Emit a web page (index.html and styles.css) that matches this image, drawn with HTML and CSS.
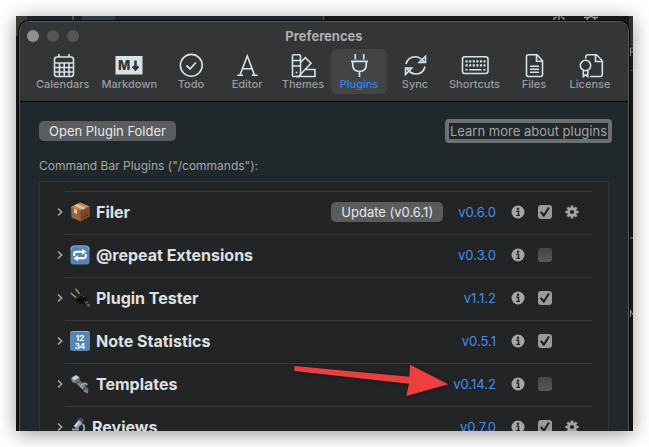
FILE: index.html
```html
<!DOCTYPE html>
<html lang="en">
<head>
<meta charset="utf-8">
<title>Preferences</title>
<meta name="viewport" content="width=device-width, initial-scale=1">
<link rel="stylesheet" href="styles.css">
</head>
<body>
<svg width="0" height="0" class="symbols" aria-hidden="true">
  <symbol id="chevron" viewBox="0 0 6 10"><path d="M1 1.500 4.700 5 1 8.500" fill="none" stroke="currentColor" stroke-width="1.500"/></symbol>
  <symbol id="info" viewBox="0 0 14 14"><circle cx="7" cy="7" r="6.500" fill="currentColor"/><circle cx="7" cy="3.800" r="1.200" fill="#232426"/><path d="M5.300 6.200H7.500V10.300M5.200 10.400H9" fill="none" stroke="#232426" stroke-width="1.400"/></symbol>
  <symbol id="gear" viewBox="0 0 14 14"><g stroke="currentColor" stroke-width="2.600"><path d="M7 .4V13.600M.4 7H13.600M2.400 2.400 11.600 11.600M11.600 2.400 2.400 11.600"/></g><circle cx="7" cy="7" r="4.800" fill="currentColor"/><circle cx="7" cy="7" r="2.100" fill="#232426"/></symbol>
</svg>

<div class="shadow">
<div class="desktop">
  <div class="behind" aria-hidden="true">
    <span class="tab-edge"></span><span class="tab-a"></span><span class="tab-b"></span><span class="tab-c"></span><span class="tab-d"></span>
    <svg class="peek" viewBox="0 0 70 5"><g fill="none" stroke="#9a9a9b" stroke-width="1.300"><path d="M1 5V2.500L4 .7M6 0V5M8 .7 11 2.500V5M31 1.500H36L38 0 40 1.500H45M35 2 33 5M41 2 43 5"/></g></svg>
  </div>
  <svg class="side" viewBox="0 0 4 415" aria-hidden="true"><path d="M0 0H4V30H0Z" fill="#303133"/><path d="M0 30H4V54H0Z" fill="#1c1d1f"/><path d="M1.500 40V32H4M1.500 36H4M1.500 301V294L4 299M1 222H4" fill="none" stroke="#8b8c8d"/><path d="M0 54.500H4" stroke="#47484a"/></svg>
  <main class="window">
    <header class="titlebar">
      <div class="caption">
        <div class="lights"><span class="light close"></span><span class="light"></span><span class="light"></span></div>
        <h1>Preferences</h1>
      </div>
      <nav class="toolbar" aria-label="Sections">
        <button class="tool"><svg viewBox="0 0 28 26"><g fill="none" stroke="currentColor" stroke-width="1.600"><rect x="5.500" y="5" width="19" height="19.500" rx="2.500"/><path d="M10 2V5M20 2V5M5.500 11H24.500M5.500 15.500H24.500M5.500 20H24.500M10.500 11V24M15.200 11V24M20 11V24"/></g></svg>Calendars</button>
        <button class="tool"><svg viewBox="0 0 28 26"><path d="M.5 4H27.500V22.500H.5Z" fill="currentColor"/><text x="3" y="18" class="mark">M</text><path d="M20.500 8.500V16M17.700 14.300 20.500 17.300 23.300 14.300" fill="none" stroke="#343537" stroke-width="2.500"/></svg>Markdown</button>
        <button class="tool"><svg viewBox="0 0 28 26"><g fill="none" stroke="currentColor" stroke-width="1.600"><circle cx="14.300" cy="13.300" r="10.900"/><path d="M9.500 13.500 13 17 19 10.500" stroke-width="1.800"/></g></svg>Todo</button>
        <button class="tool"><svg viewBox="0 0 28 26"><path d="M7 23 14.300 4 21.500 23M9.500 16.700H19.200M4.300 23.300H10M18.600 23.300H24.500" fill="none" stroke="currentColor" stroke-width="1.600"/></svg>Editor</button>
        <button class="tool"><svg viewBox="0 0 28 26"><g fill="none" stroke="currentColor" stroke-width="1.600"><rect x="3.500" y="2.700" width="8" height="21.800" rx="1"/><path d="M3.500 8.500H11.500M3.500 14H11.500M11.500 10.500 16.300 5.700 22 11.200 9.500 24.500M19.200 17.500H26V24.500H7M16.500 17.500H20"/></g><circle cx="7.500" cy="20.500" r="1" fill="currentColor"/></svg>Themes</button>
        <button class="tool selected" aria-current="page"><svg viewBox="0 0 28 26"><path d="M10.300 2V7.500M18.700 2V7.500M6 9.300H23M7.700 9.500V12.500C7.700 16.700 10 19.500 14.500 19.500S21.300 16.700 21.300 12.500V9.500M14.500 19.500V25" fill="none" stroke="currentColor" stroke-width="1.700"/></svg>Plugins</button>
        <button class="tool"><svg viewBox="0 0 28 26"><path d="M5 12C6 7.500 10 4.800 14 4.800 17.800 4.800 21 7 23 10M24.500 4.300V10.500H18.200ZM24 14.500C23 19 19.500 22 15 22 11 22 8 19.800 6 16.500M4.500 22.500V16H10.800Z" fill="none" stroke="currentColor" stroke-width="1.600"/></svg>Sync</button>
        <button class="tool"><svg viewBox="0 0 28 26"><rect x="1.500" y="4.800" width="25.500" height="16.700" rx="2.500" fill="none" stroke="currentColor" stroke-width="1.600"/><path d="M4.500 9.300H24.500M4.500 13.300H24.500" stroke="currentColor" stroke-width="2.200" stroke-dasharray="2.200 1.400"/><path d="M4.500 17.700H6.700M8.200 17.700H20.500M22.300 17.700H24.500" stroke="currentColor" stroke-width="1.600"/></svg>Shortcuts</button>
        <button class="tool"><svg viewBox="0 0 28 26"><path d="M17 2.800H8.500C7.300 2.800 6.500 3.500 6.500 4.700V22.500C6.500 23.700 7.300 24.500 8.500 24.500H20.500C21.700 24.500 22.500 23.700 22.500 22.500V8.700ZM16.500 3V9.300H22.500M10 14.300H19M10 17.300H19M10 20.200H19" fill="none" stroke="currentColor" stroke-width="1.600"/></svg>Files</button>
        <button class="tool"><svg viewBox="0 0 28 26"><g fill="none" stroke="currentColor" stroke-width="1.600"><path d="M9.800 6.500V4.700C9.800 3.500 10.500 2.800 11.700 2.800H20.500L26.300 8.800V22.500C26.300 23.700 25.500 24.500 24.300 24.500H14M19.500 3V9.500H26"/><circle cx="9.500" cy="13.500" r="5.200"/><path d="M7.300 18.500V24.500L9.500 22.800 11.800 24.500V18.500"/></g></svg>License</button>
      </nav>
    </header>

    <section class="content">
      <div class="actions">
        <button class="push">Open Plugin Folder</button>
        <button class="learn">Learn more about plugins</button>
      </div>
      <h2>Command Bar Plugins ("/commands"):</h2>
      <ul class="plugins">
        <li>
          <button class="expand" aria-label="Show Filer commands"><svg><use href="#chevron"/></svg></button>
          <svg class="emoji" viewBox="0 0 20 20"><path d="M1 5 10 .5 19.500 4.500V14.500L10.500 19.500 1.500 15.500Z" fill="#9a643c"/><path d="M1 5 10 .5 19.500 4.500 10.500 8.500Z" fill="#c18b60"/><path d="M10.500 8.500 19.500 4.500V14.500L10.500 19.500Z" fill="#7a4928"/><path d="M4 3.500 7 2 16 6 13 7.400Z" fill="#dec0a0"/><path d="M4 6.500 7 7.700V12L4 10.800Z" fill="#dfc6ad"/><path d="M13.500 14 15 13.300V15.500L13.500 16.200ZM16.500 12.500 18 11.800V14L16.500 14.700Z" fill="#4c2d1c"/></svg>
          <span class="name">Filer</span>
          <button class="push update">Update (v0.6.1)</button>
          <a class="version" href="#">v0.6.0</a>
          <button class="glyph" aria-label="About Filer"><svg><use href="#info"/></svg></button>
          <input type="checkbox" aria-label="Enable Filer" checked>
          <button class="glyph" aria-label="Filer settings"><svg><use href="#gear"/></svg></button>
        </li>
        <li>
          <button class="expand" aria-label="Show @repeat Extensions commands"><svg><use href="#chevron"/></svg></button>
          <svg class="emoji" viewBox="0 0 20 20"><rect x=".5" y=".5" width="19" height="19" rx="3" fill="#5785b4"/><path d="M1 5Q1 1 5 1H15Q19 1 19 5" fill="none" stroke="#8fb0cf"/><path d="M4.200 11V9C4.200 7.500 5 6.800 6.500 6.800H13M15.800 9V11C15.800 12.500 15 13.200 13.500 13.200H7" fill="none" stroke="#fff" stroke-width="1.900"/><path d="M12 3.800 16.500 6.800 12 9.800ZM8 10.200 3.500 13.200 8 16.200Z" fill="#fff"/></svg>
          <span class="name">@repeat Extensions</span>
          <a class="version" href="#">v0.3.0</a>
          <button class="glyph" aria-label="About @repeat Extensions"><svg><use href="#info"/></svg></button>
          <input type="checkbox" aria-label="Enable @repeat Extensions">
          <span class="glyph"></span>
        </li>
        <li>
          <button class="expand" aria-label="Show Plugin Tester commands"><svg><use href="#chevron"/></svg></button>
          <svg class="emoji" viewBox="0 0 20 20"><path d="M.8 5 6.500 10M5.500 .8 10 6.500" stroke="#b29a55" stroke-width="1.400"/><path d="M5.500 10.500 10.500 5 16.500 9.500C18 12 16 13.500 15.500 15.500L10.500 15.800C8 15.500 6 13 5.500 10.500Z" fill="#0e0e0f"/><path d="M7 10.500 10.800 6.500 14.500 9.300" fill="none" stroke="#5b5c5e"/><path d="M14 13 16 16.500 19.500 19.500V16L17 12.800Z" fill="#66696b"/><path d="M13.500 14.500 17.500 13M15.500 16.500 19 15" stroke="#111"/></svg>
          <span class="name">Plugin Tester</span>
          <a class="version" href="#">v1.1.2</a>
          <button class="glyph" aria-label="About Plugin Tester"><svg><use href="#info"/></svg></button>
          <input type="checkbox" aria-label="Enable Plugin Tester" checked>
          <span class="glyph"></span>
        </li>
        <li>
          <button class="expand" aria-label="Show Note Statistics commands"><svg><use href="#chevron"/></svg></button>
          <span class="emoji digits" aria-hidden="true">12<br>34</span>
          <span class="name">Note Statistics</span>
          <a class="version" href="#">v0.5.1</a>
          <button class="glyph" aria-label="About Note Statistics"><svg><use href="#info"/></svg></button>
          <input type="checkbox" aria-label="Enable Note Statistics" checked>
          <span class="glyph"></span>
        </li>
        <li>
          <button class="expand" aria-label="Show Templates commands"><svg><use href="#chevron"/></svg></button>
          <svg class="emoji" viewBox="0 0 20 20"><path d="M1 4 6 .8 9.500 3 10 6.500 15.500 11.500 18.500 15 18 19 14.500 17.500 6 9 2.500 8.500Z" fill="#66767e"/><path d="M1.500 4 6 1.300 9 3.300 4.500 6.500Z" fill="#bfd5de"/><path d="M1.500 5.500 4.500 7 3.700 8.500M7 8.500 13.500 15M14 17 18 18.500" fill="none" stroke="#a8817d" stroke-width="1.600"/><path d="M11.500 13.500C10.500 10.500 15.500 7.500 17 11" fill="none" stroke="#91a4ad" stroke-width="2"/><path d="M9.500 7 7 9M12.500 16 17 13" stroke="#27343c"/></svg>
          <span class="name">Templates</span>
          <span class="pointed">
            <svg class="arrow" viewBox="0 0 156 34" aria-hidden="true"><path d="M1.500 3 116.300 13.700 117 1.700 155.300 21.300 113.300 33 116 20.700 1.300 8Z" fill="#eb3f40"/></svg>
            <a class="version" href="#">v0.14.2</a>
          </span>
          <button class="glyph" aria-label="About Templates"><svg><use href="#info"/></svg></button>
          <input type="checkbox" aria-label="Enable Templates">
          <span class="glyph"></span>
        </li>
        <li>
          <button class="expand" aria-label="Show Reviews commands"><svg><use href="#chevron"/></svg></button>
          <svg class="emoji narrow" viewBox="0 0 16 20"><path d="M8.500 2 12 .5 13.500 4 11 7Z" fill="#46545d"/><path d="M3.500 9 9 2.500 12.500 6.500 7 12Z" fill="#86a3b3"/><path d="M5 9.500 9 5" stroke="#d5e6ee" stroke-width="1.500"/><path d="M12.500 7C15 9 15 14 11 16M2 12.500H9M2.500 17.500H14" fill="none" stroke="#92a2aa" stroke-width="2"/></svg>
          <span class="name">Reviews</span>
          <a class="version" href="#">v0.7.0</a>
          <button class="glyph" aria-label="About Reviews"><svg><use href="#info"/></svg></button>
          <input type="checkbox" aria-label="Enable Reviews" checked>
          <button class="glyph" aria-label="Reviews settings"><svg><use href="#gear"/></svg></button>
        </li>
      </ul>
    </section>
  </main>
</div>
</div>
</body>
</html>
```
FILE: styles.css
```css
* { box-sizing: border-box; }

body {
  margin: 0;
  padding: 16px;
  height: 100vh;
  overflow: hidden;
  background: #fff;
  color: #dfe0e0;
  font-family: Inter, "Liberation Sans", sans-serif;
  font-size: 13px;
}

button {
  border: 0;
  padding: 0;
  background: none;
  color: inherit;
  font: inherit;
}

.symbols { position: absolute; }

.shadow {
  height: 100%;
  box-shadow: 0 3px 18px rgba(0, 0, 0, 0.4);
}

.desktop {
  position: relative;
  height: 100%;
  padding: 5px 4px 0 3px;
  overflow: hidden;
  background: #141517;
}

.behind {
  position: absolute;
  inset: 0 0 auto;
  display: flex;
  height: 20px;
}

.tab-edge { width: 11px; background: #3a3a3b; }
.tab-a { width: 55px; background: linear-gradient(90deg, #1b2529 45px, #4a5153 45px 47px, #1b2529 47px); }
.tab-b { width: 33px; background: #2c3f48; }
.tab-c { width: 209px; background: #1d272b; border-right: 1px solid #57595b; }
.tab-d { flex: 1; background: #19191b; }

.peek {
  position: absolute;
  top: 0;
  right: 10px;
  width: 70px;
  height: 5px;
}

.side {
  position: absolute;
  top: 0;
  right: 0;
  width: 4px;
  height: 415px;
}

.window {
  position: relative;
  height: calc(100% + 12px);
  overflow: hidden;
  border: 1px solid #58595b;
  border-radius: 10px;
  background: #20282b;
  box-shadow: 0 0 0 1px #060606;
}

.titlebar {
  padding-bottom: 7px;
  border-bottom: 1px solid #050505;
  background: #343537;
}

.caption {
  display: grid;
  grid-template-columns: 1fr auto 1fr;
  align-items: center;
  height: 27px;
  padding: 0 7px;
}

.lights { display: flex; gap: 8px; }

.light {
  width: 12px;
  height: 12px;
  border-radius: 50%;
  background: #545557;
}

.close { background: #8f9091; }

h1 {
  margin: 0;
  color: #adaeaf;
  font-size: 13px;
  font-weight: 700;
  line-height: 16px;
}

.toolbar {
  display: flex;
  justify-content: center;
}

.tool {
  display: flex;
  flex-direction: column;
  align-items: center;
  min-width: 56px;
  height: 45px;
  padding: 3px 6px 0;
  border-radius: 6px;
  color: #9b9c9d;
  font-size: 11px;
  font-weight: 500;
  line-height: 12px;
}

.tool svg {
  width: 28px;
  height: 26px;
  color: #d7e1e6;
}

.selected {
  background: #434446;
  color: #2b82f4;
}

.mark {
  fill: #343537;
  font-size: 13px;
  font-weight: 800;
}

.content { padding: 17px 19px 0; }

.actions {
  display: flex;
  align-items: center;
  justify-content: space-between;
  margin-right: -3px;
}

.push {
  height: 20px;
  padding: 0 10px;
  border-radius: 5px;
  background: #595d60;
  color: #e6e7e7;
  line-height: 20px;
}

.learn {
  height: 24px;
  border: 4px solid #6c7072;
  border-radius: 4px;
  padding: 0 1px;
  color: #a2a5a6;
  line-height: 16px;
}

h2 {
  margin: 14px 0 7px;
  color: #a5a8a9;
  font-size: 12px;
  font-weight: 400;
  line-height: 17px;
}

.plugins {
  margin: 0;
  padding: 9px 16px 0 17px;
  border: 1px solid #333537;
  background: #232426;
  list-style: none;
}

li {
  display: flex;
  align-items: center;
  height: 43px;
  padding-bottom: 1px;
  background: linear-gradient(#38393b, #38393b) 8px 0 / 100% 1px no-repeat;
}

.expand {
  width: 6px;
  height: 10px;
  margin-right: 7px;
  color: #aaabac;
}

.expand svg {
  display: block;
  width: 6px;
  height: 10px;
}

.emoji {
  width: 20px;
  height: 20px;
  margin-right: 6px;
}

.narrow { width: 16px; }

.digits {
  padding-top: 2px;
  border-top: 1px solid #8fb0cf;
  border-radius: 3px;
  background: #5785b4;
  color: #fff;
  font-size: 8px;
  font-weight: 700;
  line-height: 8px;
  text-align: center;
}

.name {
  flex: 1;
  font-size: 16px;
  font-weight: 700;
  line-height: 20px;
}

.update {
  margin-right: 15px;
  background: #5a5b5d;
}

.version {
  color: #448eee;
  text-decoration: none;
}

.pointed { position: relative; }

.arrow {
  position: absolute;
  right: 100%;
  bottom: -5px;
  width: 156px;
  height: 34px;
  margin-right: 4px;
  filter: drop-shadow(0 1px 2px rgba(0, 0, 0, 0.4));
}

.glyph {
  width: 14px;
  height: 14px;
  color: #a5a6a7;
}

.glyph svg {
  display: block;
  width: 14px;
  height: 14px;
}

.version + .glyph,
.pointed + .glyph { margin-left: 15px; }

input {
  appearance: none;
  width: 14px;
  height: 14px;
  margin: 0 13px;
  border-radius: 3px;
  background: linear-gradient(#434446, #58595b);
}

input + .glyph { margin-right: 13px; }

input:checked {
  display: grid;
  place-items: center;
  background: #999a9b;
}

input:checked::before {
  content: "";
  width: 10px;
  height: 10px;
  background: #1d1e20;
  clip-path: polygon(0 55%, 15% 43%, 38% 68%, 82% 0, 98% 10%, 43% 98%, 33% 98%);
}
```
